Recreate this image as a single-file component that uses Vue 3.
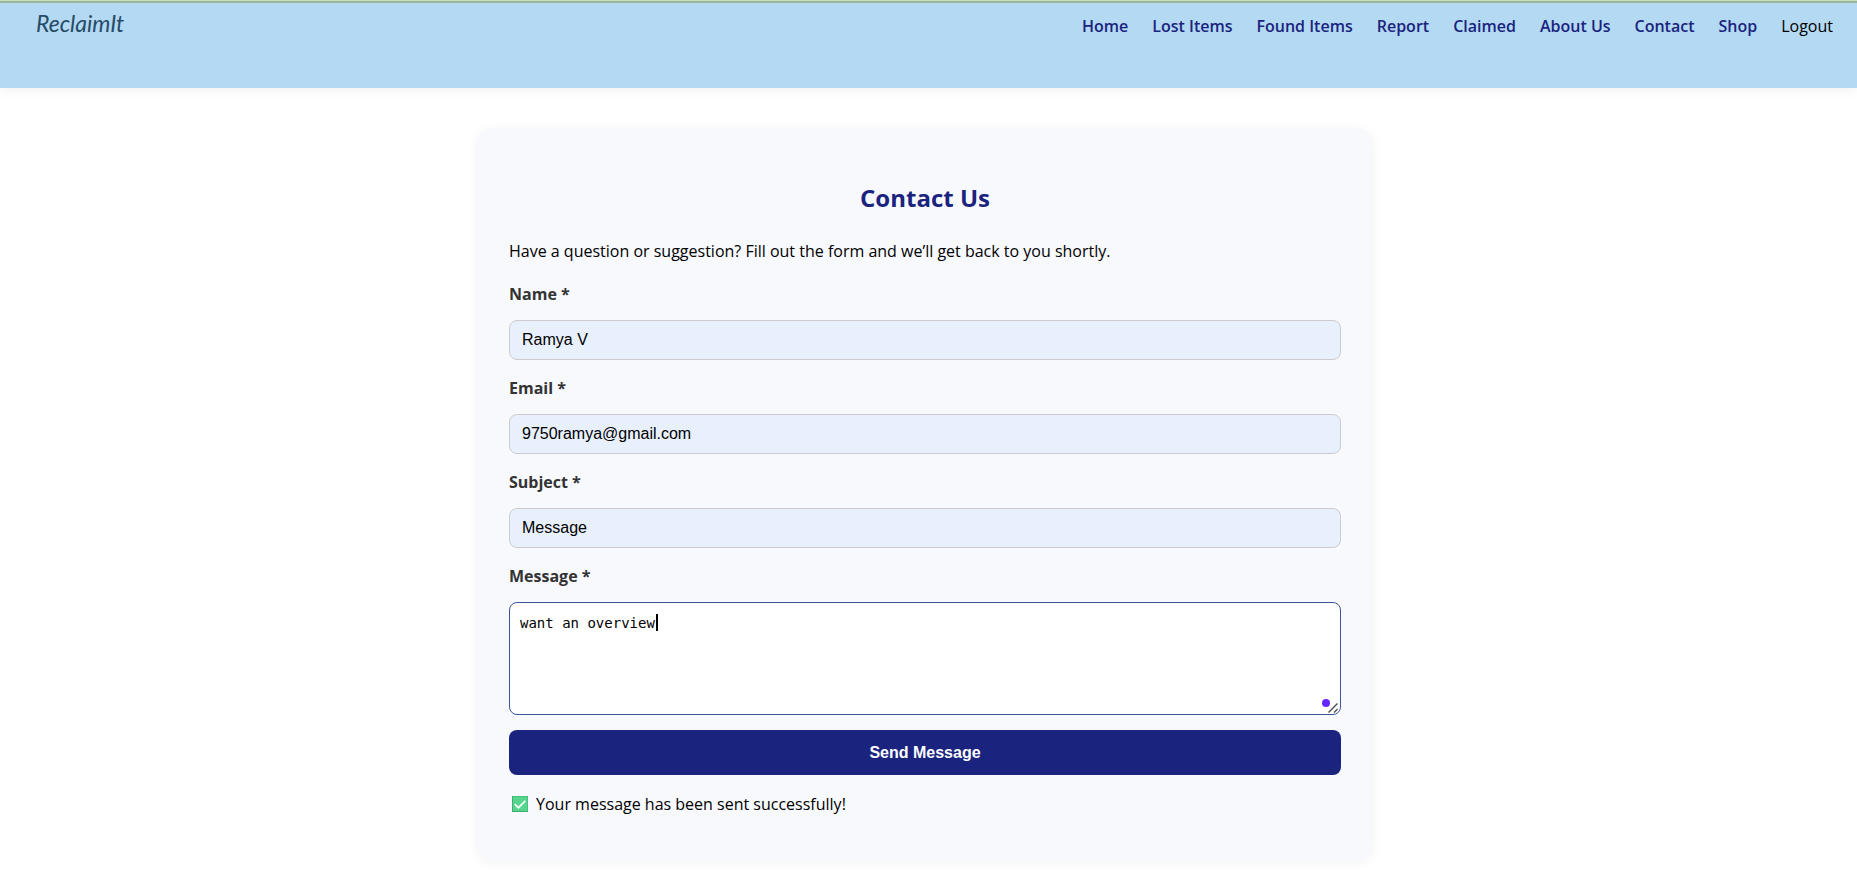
<script setup>
import { ref } from 'vue'

const links = ['Home', 'Lost Items', 'Found Items', 'Report', 'Claimed', 'About Us', 'Contact', 'Shop']
const fields = ref([
  { id: 'name', label: 'Name *', type: 'text', value: 'Ramya V' },
  { id: 'email', label: 'Email *', type: 'email', value: '9750ramya@gmail.com' },
  { id: 'subject', label: 'Subject *', type: 'text', value: 'Message' },
])
const message = ref('want an overview')
</script>

<template>
  <div class="page">
    <header class="header">
      <a class="logo" href="#">ReclaimIt</a>
      <nav class="nav">
        <a v-for="link in links" :key="link" class="link" href="#">{{ link }}</a>
        <a class="link logout" href="#">Logout</a>
      </nav>
    </header>

    <main class="main">
      <section class="card">
        <h2 class="title">Contact Us</h2>
        <p class="intro">Have a question or suggestion? Fill out the form and we’ll get back to you shortly.</p>
        <form class="form" @submit.prevent>
          <div v-for="field in fields" :key="field.id" class="field">
            <label class="label" :for="field.id">{{ field.label }}</label>
            <input :id="field.id" v-model="field.value" class="input" :type="field.type" required />
          </div>
          <div class="field">
            <label class="label" for="message">Message *</label>
            <div class="area">
              <textarea id="message" v-model="message" class="textarea" spellcheck="false" required></textarea>
              <span class="caret"></span>
              <span class="dot"></span>
              <svg class="grip" viewBox="0 0 10 10" aria-hidden="true">
                <path d="M0.5 9.5 9.5 0.5M6 9.5 9.5 6" fill="none" stroke="#555" stroke-width="1.5" />
              </svg>
            </div>
          </div>
          <button class="send" type="submit">Send Message</button>
        </form>
        <p class="status">
          <svg class="check" viewBox="0 0 16 16" aria-hidden="true">
            <rect width="16" height="16" fill="#3fae72" />
            <rect x="1" y="0.5" width="14.5" height="14.5" fill="#56d68c" />
            <path d="M2.8 8.2 6.4 11.8 13.2 4.8" fill="none" stroke="#fff" stroke-width="1.8" />
          </svg>
          <span>Your message has been sent successfully!</span>
        </p>
      </section>
    </main>
  </div>
</template>

<style>
body {
  margin: 0;
  background: #fff;
}
</style>

<style scoped>
.page {
  font-family: "Segoe UI", "Open Sans", "Noto Sans", sans-serif;
  font-size: 16px;
  line-height: 24px;
  color: #000;
  border-top: 1px solid #c3e6c0;
}

.header {
  display: flex;
  justify-content: space-between;
  align-items: flex-start;
  box-sizing: border-box;
  min-height: 87px;
  padding: 8px 24px 0 36px;
  border-top: 2px solid #9db39b;
  background: #b3d9f3;
  box-shadow: 0 2px 12px rgba(0, 0, 0, 0.06);
}

.logo {
  font-family: Lato, sans-serif;
  font-size: 23px;
  font-style: italic;
  color: #264b68;
  text-decoration: none;
}

.nav {
  display: flex;
  gap: 24px;
  padding-top: 3px;
}

.link {
  font-weight: 600;
  color: #1a237e;
  text-decoration: none;
}

.logout {
  font-weight: 400;
  color: #000;
}

.main {
  padding: 40px 7px 20px 0;
}

.card {
  box-sizing: border-box;
  max-width: 896px;
  margin: 0 auto;
  padding: 54px 32px 45px;
  border-radius: 16px;
  background: #f8f9fd;
  box-shadow: 0 2px 12px rgba(0, 0, 0, 0.05);
}

.title {
  margin: 0 0 25px;
  font-size: 24px;
  line-height: 32px;
  font-weight: 700;
  text-align: center;
  color: #1a237e;
}

.intro {
  margin: 0 0 18px;
}

.form {
  display: flex;
  flex-direction: column;
  gap: 15px;
}

.field {
  display: flex;
  flex-direction: column;
  gap: 13px;
}

.label {
  line-height: 26px;
  font-weight: 700;
  color: #333;
}

.input {
  box-sizing: border-box;
  width: 100%;
  height: 40px;
  padding: 0 12px;
  border: 1px solid #ccc;
  border-radius: 8px;
  background: #e8f0fe;
  font: 16px "Liberation Sans", Arial, sans-serif;
  color: #000;
  outline: none;
}

.area {
  position: relative;
  display: flex;
}

.textarea {
  box-sizing: border-box;
  width: 100%;
  height: 113px;
  padding: 11px 10px;
  border: 1px solid #3b559b;
  border-radius: 8px;
  background: #fff;
  font: 14px/18px "DejaVu Sans Mono", monospace;
  color: #000;
  outline: none;
  resize: vertical;
}

.textarea::-webkit-resizer {
  background: transparent;
}

.caret {
  position: absolute;
  top: 12px;
  left: 147px;
  width: 2px;
  height: 17px;
  background: #000;
}

.dot {
  position: absolute;
  right: 11px;
  bottom: 8px;
  width: 8px;
  height: 8px;
  border-radius: 50%;
  background: #6428ff;
}

.grip {
  position: absolute;
  right: 3px;
  bottom: 2px;
  width: 10px;
  height: 10px;
  pointer-events: none;
}

.send {
  height: 45px;
  border: 0;
  border-radius: 8px;
  background: #1a237e;
  font: 700 16px "Liberation Sans", Arial, sans-serif;
  color: #fff;
}

.status {
  display: flex;
  align-items: center;
  gap: 8px;
  margin: 17px 0 0;
  padding-left: 3px;
}

.check {
  width: 16px;
  height: 16px;
}
</style>
